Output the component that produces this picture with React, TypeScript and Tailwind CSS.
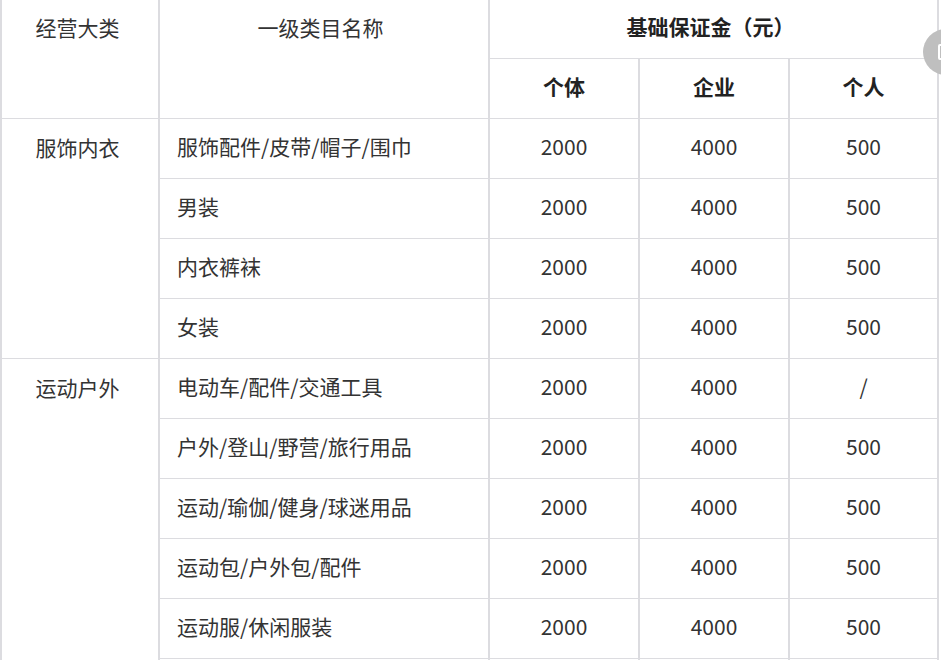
import React from 'react'

type Row = { name: string; a: string; b: string; c: string }

const groups: { category: string; rows: Row[] }[] = [
  {
    category: '服饰内衣',
    rows: [
      { name: '服饰配件/皮带/帽子/围巾', a: '2000', b: '4000', c: '500' },
      { name: '男装', a: '2000', b: '4000', c: '500' },
      { name: '内衣裤袜', a: '2000', b: '4000', c: '500' },
      { name: '女装', a: '2000', b: '4000', c: '500' },
    ],
  },
  {
    category: '运动户外',
    rows: [
      { name: '电动车/配件/交通工具', a: '2000', b: '4000', c: '/' },
      { name: '户外/登山/野营/旅行用品', a: '2000', b: '4000', c: '500' },
      { name: '运动/瑜伽/健身/球迷用品', a: '2000', b: '4000', c: '500' },
      { name: '运动包/户外包/配件', a: '2000', b: '4000', c: '500' },
      { name: '运动服/休闲服装', a: '2000', b: '4000', c: '500' },
      // next row continues below the fold
      { name: '', a: '', b: '', c: '' },
    ],
  },
]

const cell = 'border-x-2 border-y border-[#dcdce0] h-[60px] p-0 pb-[3px] align-middle'

export default function App() {
  return (
    <div
      className="relative w-full overflow-hidden bg-white text-[21px] text-[#333]"
      style={{ fontFamily: '"Noto Sans CJK SC", "Noto Sans", sans-serif' }}
    >
      <table className="-mt-[2px] w-[939px] table-fixed border-collapse">
        <colgroup>
          <col className="w-[158px]" />
          <col className="w-[330px]" />
          <col className="w-[150px]" />
          <col className="w-[150px]" />
          <col className="w-[149px]" />
        </colgroup>
        <thead>
          <tr>
            <th rowSpan={2} className={`${cell} align-top font-normal`}>
              <div className="flex h-[57px] items-center justify-center pr-[5px]">经营大类</div>
            </th>
            <th rowSpan={2} className={`${cell} align-top font-normal`}>
              <div className="flex h-[57px] items-center justify-center pr-[7px]">一级类目名称</div>
            </th>
            <th colSpan={3} className={`${cell} pr-[6px] font-bold text-[#222]`}>
              基础保证金（元）
            </th>
          </tr>
          <tr>
            <th className={`${cell} font-bold text-[#222]`}>个体</th>
            <th className={`${cell} font-bold text-[#222]`}>企业</th>
            <th className={`${cell} font-bold text-[#222]`}>个人</th>
          </tr>
        </thead>
        <tbody>
          {groups.map((g) =>
            g.rows.map((r, i) => (
              <tr key={g.category + i}>
                {i === 0 && (
                  <td rowSpan={g.rows.length} className={`${cell} align-top text-center`}>
                    <div className="flex h-[57px] items-center justify-center pr-[5px]">{g.category}</div>
                  </td>
                )}
                <td className={`${cell} pl-[17px] text-left`}>{r.name}</td>
                <td className={`${cell} text-center`}>{r.a}</td>
                <td className={`${cell} text-center`}>{r.b}</td>
                <td className={`${cell} text-center`}>{r.c}</td>
              </tr>
            ))
          )}
        </tbody>
      </table>

      {/* floating side button */}
      <div className="absolute left-[923px] top-[29px] flex h-[46px] w-[46px] items-center justify-center rounded-full bg-[#bfbfbf]">
        <svg width="20" height="20" viewBox="0 0 20 20" fill="none" stroke="#fff" strokeWidth="2">
          <rect x="3" y="3" width="14" height="14" rx="1" />
          <path d="M7 3v14" />
        </svg>
      </div>
    </div>
  )
}
